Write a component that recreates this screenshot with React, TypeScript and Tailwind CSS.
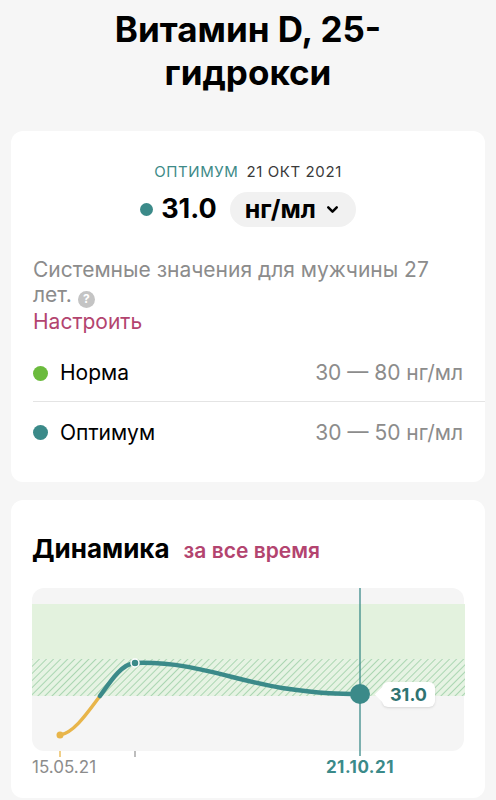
import { ChevronDown } from 'lucide-react';

const font = { fontFamily: 'Inter, "Noto Sans", sans-serif' };

function Chart() {
  return (
    <div className="relative mt-[24px] h-[163px] w-full rounded-xl bg-[#f5f5f5]">
      <svg
        className="absolute left-0 top-0 overflow-visible"
        width="433"
        height="163"
        viewBox="0 0 433 163"
      >
        <defs>
          <pattern id="hatch" width="5" height="5" patternUnits="userSpaceOnUse" patternTransform="rotate(45)">
            <rect width="5" height="5" fill="#e6f3e3" />
            <line x1="0" y1="0" x2="0" y2="5" stroke="#9ccfa6" strokeWidth="1.6" />
          </pattern>
        </defs>
        <rect x="0" y="16" width="433" height="55" fill="#e3f2de" />
        <rect x="0" y="71" width="433" height="37" fill="url(#hatch)" />
        <line x1="328" y1="0" x2="328" y2="168" stroke="#3b8a89" strokeWidth="1.3" />
        <line x1="28" y1="163" x2="28" y2="169" stroke="#e8b54a" strokeWidth="1.3" />
        <line x1="103" y1="163" x2="103" y2="169" stroke="#9a9a9a" strokeWidth="1.3" />
        <path d="M28 147 C 42 145, 56 124, 68 108" fill="none" stroke="#e8b54a" strokeWidth="3.5" strokeLinecap="round" />
        <path
          d="M68 108 C 80 91, 90 76, 103 75 C 160 73, 200 92, 250 100 C 290 106, 310 106, 328 106"
          fill="none"
          stroke="#3b8a89"
          strokeWidth="4.5"
          strokeLinecap="round"
        />
        <circle cx="28" cy="147" r="3.5" fill="#e8b54a" />
        <circle cx="103" cy="75" r="4" fill="#3b8a89" stroke="#ffffff" strokeWidth="1.5" />
        <circle cx="328" cy="106" r="10" fill="#3b8a89" />
      </svg>
      <div className="absolute left-[350px] top-[94px] flex h-[25px] items-center rounded-md bg-white px-[8px] shadow-sm">
        <div className="absolute -left-[5px] top-[7px] h-[11px] w-[11px] rotate-45 bg-white" />
        <span className="relative text-[18px] font-bold text-[#2f7372]">31.0</span>
      </div>
    </div>
  );
}

export default function App() {
  return (
    <div className="min-h-[800px] w-[496px] overflow-hidden bg-[#f6f6f6]" style={font}>
      <h1 className="pt-[8px] text-center text-[35px] font-bold leading-[43px] text-black">
        Витамин D, 25-
        <br />
        гидрокси
      </h1>

      <div className="mx-[11px] mt-[37px] h-[351px] rounded-[12px] bg-white pl-[22px]">
        <div className="pr-[22px] pt-[31px] text-center">
          <div className="flex h-[20px] items-center justify-center gap-[8px] text-[15px] tracking-[0.6px]">
            <span className="text-[#3d8a88]">ОПТИМУМ</span>
            <span className="text-[#3a3a3a]">21 ОКТ 2021</span>
          </div>
          <div className="mt-[10px] flex h-[35px] items-center justify-center">
            <span className="mr-[8px] h-[13px] w-[13px] rounded-full bg-[#3b8a89]" />
            <span className="text-[27px] font-bold text-black">31.0</span>
            <div className="ml-[13px] flex h-[35px] items-center gap-[8px] rounded-full bg-[#f1f1f1] px-[15px]">
              <span className="text-[25px] font-bold text-black">нг/мл</span>
              <ChevronDown className="h-[17px] w-[17px] text-black" strokeWidth={3.5} />
            </div>
          </div>
        </div>

        <p className="mt-[30px] pr-[22px] text-[21px] leading-[25px] text-[#8c8c8c]">
          Системные значения для мужчины 27 лет.{' '}
          <span className="inline-flex h-[17px] w-[17px] items-center justify-center rounded-full bg-[#c4c4c4] align-[-1px] text-[12px] font-bold leading-none text-white">
            ?
          </span>
        </p>
        <p className="text-[21px] leading-[27px] text-[#b3446f]">Настроить</p>

        <div className="mt-[11px] flex h-[56px] items-center border-b border-[#e4e4e4] pr-[22px]">
          <span className="h-[15px] w-[15px] rounded-full bg-[#6bbb3d]" />
          <span className="ml-[12px] flex-1 text-[21px] text-black">Норма</span>
          <span className="text-[21px] text-[#8c8c8c]">30 — 80 нг/мл</span>
        </div>
        <div className="flex h-[62px] items-center pr-[22px]">
          <span className="h-[15px] w-[15px] rounded-full bg-[#3b8a89]" />
          <span className="ml-[12px] flex-1 text-[21px] text-black">Оптимум</span>
          <span className="text-[21px] text-[#8c8c8c]">30 — 50 нг/мл</span>
        </div>
      </div>

      <div className="mx-[11px] mt-[18px] h-[298px] rounded-[12px] bg-white px-[21px] pt-[34px]">
        <div className="flex h-[30px] items-baseline gap-[14px]">
          <span className="text-[26px] font-bold leading-[30px] text-black">Динамика</span>
          <span className="text-[21px] font-semibold text-[#b3446f]">за все время</span>
        </div>
        <Chart />
        <div className="relative mt-[4px] h-[22px] text-[17px]">
          <span className="absolute left-0 top-0 text-[#8c8c8c]">15.05.21</span>
          <span className="absolute left-[328px] top-0 -translate-x-1/2 font-bold tracking-[0.5px] text-[#3b8a89]">21.10.21</span>
        </div>
      </div>
    </div>
  );
}
